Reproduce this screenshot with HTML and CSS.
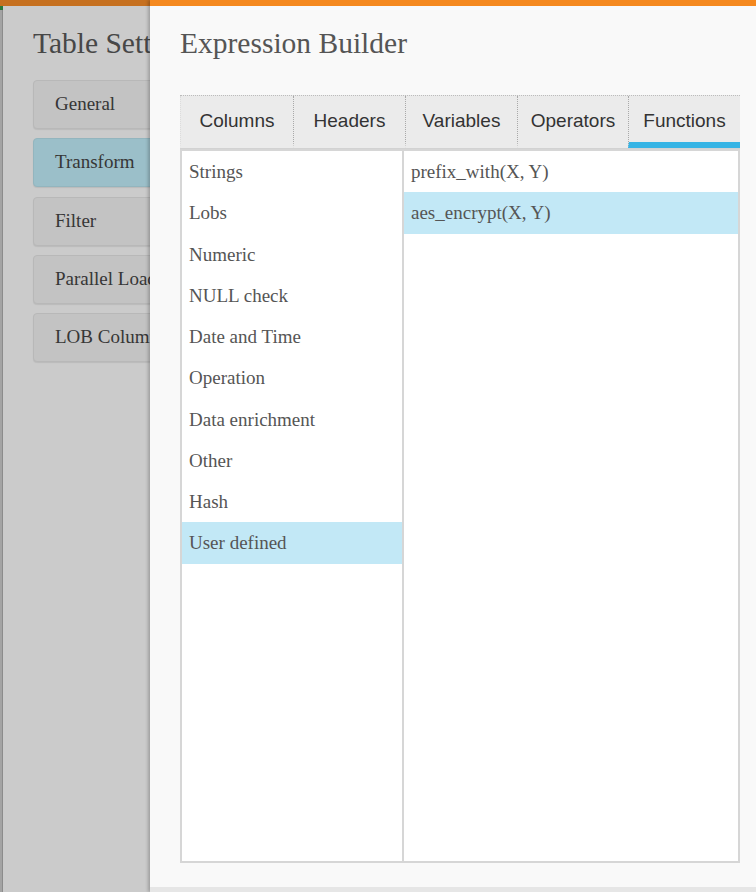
FILE: index.html
```html
<!DOCTYPE html>
<html>
<head>
<meta charset="utf-8">
<title>Expression Builder</title>
<link rel="stylesheet" href="styles.css">
</head>
<body>
<div class="page">
  <div class="page-bar"><span class="page-bar-mark"></span></div>
  <div class="page-body">
    <div class="page-strip"></div>
    <div class="page-main">
      <h1 class="page-title">Table Settings</h1>
      <nav class="nav">
        <div class="nav-item">General</div>
        <div class="nav-item active">Transform</div>
        <div class="nav-item">Filter</div>
        <div class="nav-item">Parallel Load</div>
        <div class="nav-item">LOB Columns</div>
      </nav>
    </div>
  </div>
</div>

<aside class="drawer">
  <div class="drawer-bar"></div>
  <h2 class="drawer-title">Expression Builder</h2>
  <div class="tabs">
    <div class="tab">Columns</div>
    <div class="tab">Headers</div>
    <div class="tab">Variables</div>
    <div class="tab">Operators</div>
    <div class="tab active">Functions</div>
  </div>
  <div class="panels">
    <ul class="list list-categories">
      <li class="item">Strings</li>
      <li class="item">Lobs</li>
      <li class="item">Numeric</li>
      <li class="item">NULL check</li>
      <li class="item">Date and Time</li>
      <li class="item">Operation</li>
      <li class="item">Data enrichment</li>
      <li class="item">Other</li>
      <li class="item">Hash</li>
      <li class="item selected">User defined</li>
    </ul>
    <ul class="list list-functions">
      <li class="item">prefix_with(X, Y)</li>
      <li class="item selected">aes_encrypt(X, Y)</li>
    </ul>
  </div>
  <div class="drawer-footer"></div>
</aside>
</body>
</html>
```

FILE: styles.css
```css
html, body {
  margin: 0;
  padding: 0;
}

body {
  width: 756px;
  height: 892px;
  overflow: hidden;
  position: relative;
  background: #cbcbcb;
  font-family: "Liberation Serif", "Times New Roman", serif;
}

/* underlying (dimmed) page, visible only left of the drawer */
.page {
  display: flex;
  flex-direction: column;
  height: 100%;
}

.page-bar {
  height: 6px;
  background: #c6701f;
  display: flex;
}

.page-bar-mark {
  width: 3px;
  height: 100%;
}

.page-body {
  flex: 1;
  width: 150px;
  display: flex;
  overflow: hidden;
}

.page-strip {
  width: 3px;
  flex: none;
  background: linear-gradient(to right, #a4a4a4 0, #a4a4a4 2px, #8c8c8c 2px);
}

.page-strip::before {
  content: "";
  display: block;
  height: 4px;
  background: #2c7a3a;
}

.page-main {
  flex: 1;
  min-width: 0;
  padding-left: 30px;
  overflow: hidden;
}

.page-title {
  margin: 22px 0 0 0;
  font-size: 29.5px;
  line-height: 30px;
  font-weight: normal;
  color: #474747;
  white-space: nowrap;
  overflow: hidden;
}

.nav {
  margin-top: 22px;
  width: 200px;
  display: flex;
  flex-direction: column;
  gap: 9.3px;
}

.nav-item {
  height: 49px;
  box-sizing: border-box;
  border: 1px solid #b8b8b8;
  border-radius: 4px;
  background: #c3c3c3;
  padding-left: 21px;
  font-size: 19px;
  line-height: 45px;
  color: #363636;
  white-space: nowrap;
  overflow: hidden;
  box-shadow: 0 1px 1px rgba(0, 0, 0, 0.08);
}

.nav-item.active {
  background: #9bbfc9;
  border-color: #93b5be;
}

/* drawer */
.drawer {
  position: absolute;
  top: 0;
  left: 150px;
  right: 0;
  bottom: 0;
  background: #f9f9f9;
  box-shadow: -2px 0 3px rgba(0, 0, 0, 0.22);
  display: flex;
  flex-direction: column;
}

.drawer-bar {
  height: 6px;
  background: #f5891f;
}

.drawer-title {
  margin: 22px 0 0 30px;
  font-size: 29.5px;
  line-height: 30px;
  font-weight: normal;
  color: #555555;
}

.tabs {
  margin: 37px 16px 0 30px;
  display: grid;
  grid-template-columns: 113px 112px 112px 111px 1fr;
  border-top: 1px dotted #bcbcbc;
  border-bottom: 1px solid #d2d2d2;
  background: #ebebeb;
}

.tab {
  height: 52px;
  box-sizing: border-box;
  border-left: 1px dotted #a9a9a9;
  border-bottom: 6px solid transparent;
  padding-top: 3px;
  font-family: "Liberation Sans", Arial, sans-serif;
  font-size: 19px;
  line-height: 44px;
  color: #333333;
  text-align: center;
}

.tab:first-child {
  border-left-color: #dcdcdc;
}

.tab.active {
  border-bottom-color: #36b4e5;
}

.panels {
  flex: 1;
  margin: 0 16px 24px 30px;
  display: grid;
  grid-template-columns: 222px 1fr;
  border: 2px solid #d6d6d6;
  background: #ffffff;
}

.list {
  margin: 0;
  padding: 0;
  list-style: none;
}

.list-categories {
  border-right: 2px solid #d6d6d6;
}

.item {
  height: 41.25px;
  line-height: 41.25px;
  padding-left: 7px;
  font-size: 19px;
  color: #555555;
  white-space: nowrap;
}

.item.selected {
  background: #c2e8f6;
}

.drawer-footer {
  height: 5px;
  background: #e6e6e6;
}
```
